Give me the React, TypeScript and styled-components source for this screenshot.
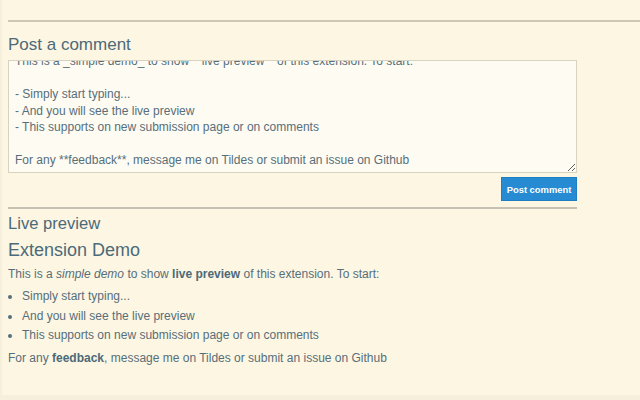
import { useEffect, useRef } from 'react';
import styled, { createGlobalStyle } from 'styled-components';

const GlobalStyle = createGlobalStyle`
  html, body {
    margin: 0;
    padding: 0;
    background: #fdf6e3;
  }
  body {
    font-family: 'Liberation Sans', Arial, sans-serif;
    color: #586e75;
  }
`;

const Page = styled.div`
  width: 640px;
  height: 400px;
  overflow: hidden;
  display: flex;
  flex-direction: column;
  background: #fdf6e3;
  border-left: 2px solid #f6efdc;
  box-sizing: border-box;
`;

const Main = styled.main`
  flex: 1;
  padding: 20px 0 0 6px;
`;

const TopRule = styled.hr`
  margin: 0;
  border: none;
  border-top: 2px solid #cdc7b3;
`;

const Section = styled.section`
  width: 569px;
`;

const Heading = styled.h2<{ $size: number; $gap: number }>`
  margin: ${(p) => p.$gap}px 0 0;
  font-size: ${(p) => p.$size}px;
  font-weight: 400;
  color: #4c6a78;
  line-height: 1.2;
`;

const CommentForm = styled.form`
  display: flex;
  flex-direction: column;
  align-items: flex-end;
  gap: 4px;
  margin-top: 5px;
`;

const Editor = styled.textarea`
  display: block;
  box-sizing: border-box;
  width: 100%;
  height: 113px;
  padding: 6px 6px 3px;
  margin: 0;
  border: 1px solid #d8d2c0;
  background: #fefbf3;
  color: #566f7a;
  font-family: 'Liberation Sans', Arial, sans-serif;
  font-size: 12px;
  line-height: 16.5px;
  resize: vertical;
  outline: none;
`;

const SubmitButton = styled.button`
  box-sizing: border-box;
  height: 24px;
  width: 76px;
  padding: 0;
  border: 1px solid #1f7fc3;
  background: #268bd2;
  color: #fff;
  font-family: 'Liberation Sans', Arial, sans-serif;
  font-size: 9.4px;
  font-weight: 700;
  cursor: pointer;
`;

const Divider = styled.hr`
  margin: 6px 0 0;
  border: none;
  border-top: 2px solid #c5c2b4;
`;

const Preview = styled.div`
  font-size: 12px;
  line-height: 16px;
  color: #566f7a;

  p {
    margin: 4px 0 0;
  }
  ul {
    margin: 5px 0 0;
    padding-left: 14px;
  }
  li {
    line-height: 19.7px;
  }
  ul + p {
    margin-top: 4px;
  }
  strong {
    color: #4c6a78;
  }
`;

const Footer = styled.footer`
  height: 5px;
  background: #f6efdc;
`;

const source = `# Extension Demo

This is a _simple demo_ to show **live preview** of this extension. To start:

- Simply start typing...
- And you will see the live preview
- This supports on new submission page or on comments

For any **feedback**, message me on Tildes or submit an issue on Github`;

export default function App() {
  const editorRef = useRef<HTMLTextAreaElement>(null);

  useEffect(() => {
    const el = editorRef.current;
    if (el) el.scrollTop = el.scrollHeight;
  }, []);

  return (
    <>
      <GlobalStyle />
      <Page>
        <Main>
          <TopRule />
          <Section>
            <Heading $size={17} $gap={13}>
              Post a comment
            </Heading>
            <CommentForm onSubmit={(e) => e.preventDefault()}>
              <Editor ref={editorRef} defaultValue={source} />
              <SubmitButton type="submit">Post comment</SubmitButton>
            </CommentForm>
            <Divider />
            <Heading $size={16.6} $gap={5}>
              Live preview
            </Heading>
            <Heading $size={18} $gap={6}>
              Extension Demo
            </Heading>
            <Preview>
              <p>
                This is a <em>simple demo</em> to show <strong>live preview</strong> of this
                extension. To start:
              </p>
              <ul>
                <li>Simply start typing...</li>
                <li>And you will see the live preview</li>
                <li>This supports on new submission page or on comments</li>
              </ul>
              <p>
                For any <strong>feedback</strong>, message me on Tildes or submit an issue on
                Github
              </p>
            </Preview>
          </Section>
        </Main>
        <Footer />
      </Page>
    </>
  );
}
